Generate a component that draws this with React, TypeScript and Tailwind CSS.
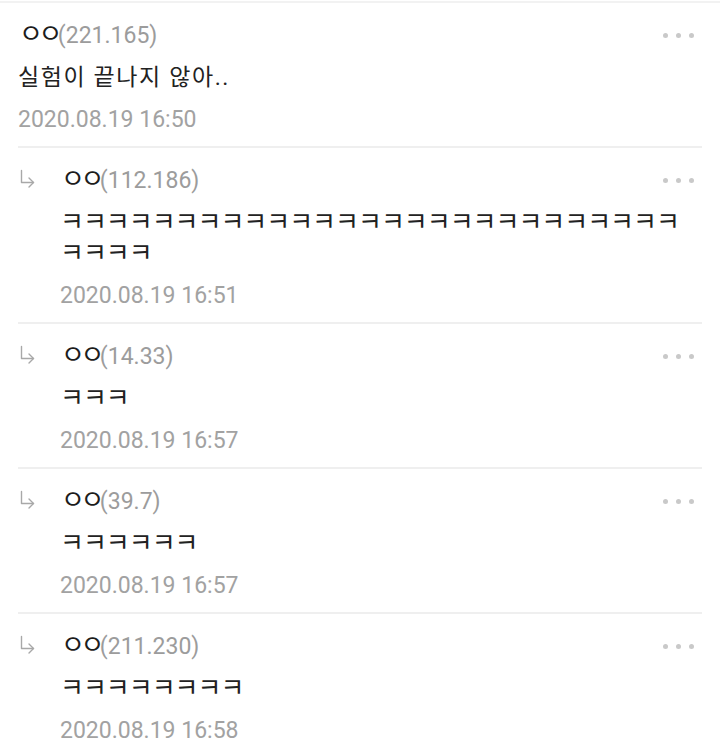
import { ReactNode } from 'react'

// comment thread (mobile web capture)
const ROOT = {
  nick: 'ㅇㅇ',
  ip: '(221.165)',
  body: '실험이 끝나지 않아..',
  date: '2020.08.19 16:50',
}

const REPLIES = [
  { nick: 'ㅇㅇ', ip: '(112.186)', body: 'ㅋㅋㅋㅋㅋㅋㅋㅋㅋㅋㅋㅋㅋㅋㅋㅋㅋㅋㅋㅋㅋㅋㅋㅋㅋㅋㅋㅋㅋㅋㅋ', date: '2020.08.19 16:51' },
  { nick: 'ㅇㅇ', ip: '(14.33)', body: 'ㅋㅋㅋ', date: '2020.08.19 16:57' },
  { nick: 'ㅇㅇ', ip: '(39.7)', body: 'ㅋㅋㅋㅋㅋㅋ', date: '2020.08.19 16:57' },
  { nick: 'ㅇㅇ', ip: '(211.230)', body: 'ㅋㅋㅋㅋㅋㅋㅋㅋ', date: '2020.08.19 16:58' },
]

function MoreDots() {
  return (
    <div className="flex items-center gap-[8px] pr-[8px]">
      <span className="w-[5px] h-[5px] rounded-full bg-[#c9c9c9]" />
      <span className="w-[5px] h-[5px] rounded-full bg-[#c9c9c9]" />
      <span className="w-[5px] h-[5px] rounded-full bg-[#c9c9c9]" />
    </div>
  )
}

function ReplyArrow() {
  return (
    <svg width="18" height="20" viewBox="0 0 18 20" fill="none" stroke="#a8a8a8" strokeWidth="1.4" strokeLinecap="round" strokeLinejoin="round">
      <path d="M3.5 1.5 V13.5 H15.5" />
      <path d="M11 9 L15.5 13.5 L11 18" />
    </svg>
  )
}

function Comment({ nick, ip, body, date, reply, last }: {
  nick: string; ip: string; body: string; date: string; reply?: boolean; last?: boolean
}) {
  const indent: ReactNode = reply ? (
    <div className="w-[42px] shrink-0 pt-[4px]">
      <ReplyArrow />
    </div>
  ) : null

  // jamo-only bodies (ㅋㅋ) render small in Noto, so bump them
  const bodyCls = reply
    ? 'text-[26px] tracking-[-1px]'
    : 'text-[23px] tracking-[1.6px]'

  return (
    <div className={`flex pt-[17px] pb-[11px] ${last ? '' : 'border-b-2 border-[#efefef]'}`}>
      {indent}
      <div className="flex-1 min-w-0">
        <div className="flex items-center justify-between h-[30px]">
          <p className="text-[23px] leading-[30px] pl-[1px] whitespace-nowrap">
            <span className="text-[26px] text-[#1c1c1c] tracking-[-4.5px]">{nick}</span>
            <span className="text-[#9c9c9c]">{ip}</span>
          </p>
          <MoreDots />
        </div>
        <p className={`mt-[12px] leading-[31px] text-[#222] break-all pr-[10px] ${bodyCls}`}>{body}</p>
        <p className="mt-[12px] text-[23px] leading-[30px] text-[#a2a2a2]">{date}</p>
      </div>
    </div>
  )
}

export default function App() {
  return (
    <div className="w-[720px] h-[750px] overflow-hidden bg-white font-['Roboto','Noto_Sans_CJK_KR',sans-serif]">
      <div className="mt-px h-[2px] bg-[#f2f2f2]" />
      <div className="px-[18px]">
        <Comment {...ROOT} />
        {REPLIES.map((r, i) => (
          <Comment key={i} {...r} reply last={i === REPLIES.length - 1} />
        ))}
      </div>
    </div>
  )
}
